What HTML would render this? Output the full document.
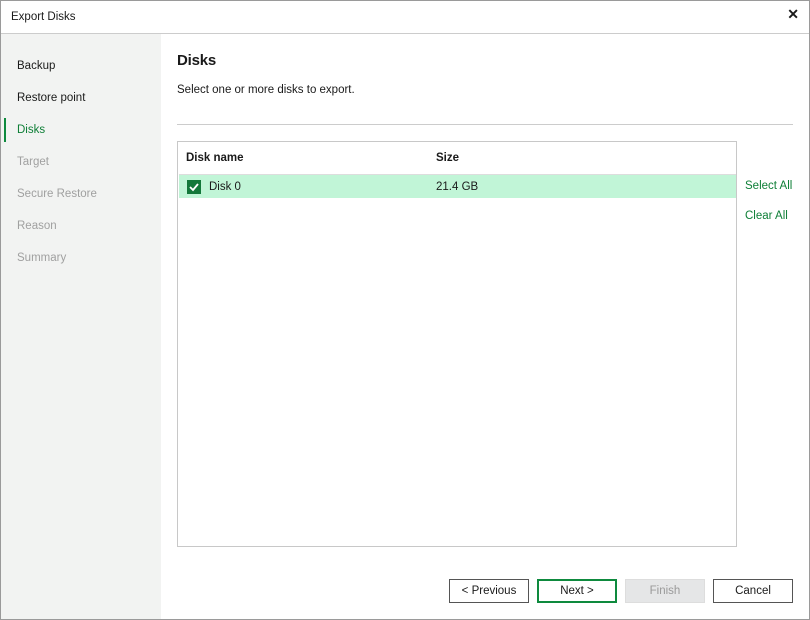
<!DOCTYPE html>
<html><head><style>
*{margin:0;padding:0;box-sizing:border-box}
body{width:810px;height:620px;position:relative;font-family:"Liberation Sans",sans-serif;font-size:11.5px;line-height:16px;color:#1a1a1a;background:#fff;overflow:hidden}
.frame{position:absolute;left:0;top:0;width:810px;height:620px;border:1px solid #9a9a9a}
.title{position:absolute;left:11px;top:9px}
.x{position:absolute;right:11px;top:6px;font-size:14px;font-weight:bold}
.hline{position:absolute;left:1px;top:33px;width:808px;height:1px;background:#ccc}
.side{position:absolute;left:1px;top:34px;width:160px;height:585px;background:#f2f3f2}
.side div{position:absolute;left:16px}
.side .g{color:#a0a0a0}
.bar{position:absolute;left:4px;top:118px;width:2px;height:24px;background:#0e8a3e}
h1{position:absolute;left:177px;top:52px;font-size:15px;line-height:18px;font-weight:bold;letter-spacing:-0.2px}
.sub{position:absolute;left:177px;top:82px}
.sep{position:absolute;left:177px;top:124px;width:616px;height:1px;background:#ccc}
.tbl{position:absolute;left:177px;top:141px;width:560px;height:406px;border:1px solid #c8c8c8}
.hd{position:absolute;top:8px;font-weight:bold}
.row{position:absolute;left:1px;top:32px;width:557px;height:24px;background:#c1f5d7;border-top:1px solid #ddd}
.cb{position:absolute;left:8px;top:5px;width:14px;height:14px;background:#13783a}
.link{position:absolute;left:745px;color:#0e7f37}
.btn{position:absolute;top:579px;height:24px;border:1px solid #555;text-align:center;line-height:22px;background:#fff}
</style></head><body>
<div class="frame"></div>
<div class="title">Export Disks</div>
<div class="x">✕</div>
<div class="hline"></div>
<div class="side">
<div style="top:24px">Backup</div>
<div style="top:56px">Restore point</div>
<div style="top:88px;color:#0e7f37">Disks</div>
<div class="g" style="top:120px">Target</div>
<div class="g" style="top:152px">Secure Restore</div>
<div class="g" style="top:184px">Reason</div>
<div class="g" style="top:216px">Summary</div>
</div>
<div class="bar"></div>
<h1>Disks</h1>
<div class="sub">Select one or more disks to export.</div>
<div class="sep"></div>
<div class="tbl">
<div class="hd" style="left:8px">Disk name</div>
<div class="hd" style="left:258px">Size</div>
<div class="row">
<div class="cb"><svg width="14" height="14"><path d="M3 7 L6 10 L11 4" stroke="#fff" stroke-width="1.8" fill="none"/></svg></div>
<div style="position:absolute;left:30px;top:4px">Disk 0</div>
<div style="position:absolute;left:257px;top:4px">21.4 GB</div>
</div>
</div>
<div class="link" style="top:178px">Select All</div>
<div class="link" style="top:208px">Clear All</div>
<div class="btn" style="left:449px;width:80px">&lt; Previous</div>
<div class="btn" style="left:537px;width:80px;border:2px solid #0e8a3e;line-height:20px">Next &gt;</div>
<div class="btn" style="left:625px;width:80px;border-color:#ddd;background:#e5e6e7;color:#9a9a9a">Finish</div>
<div class="btn" style="left:713px;width:80px">Cancel</div>
</body></html>
